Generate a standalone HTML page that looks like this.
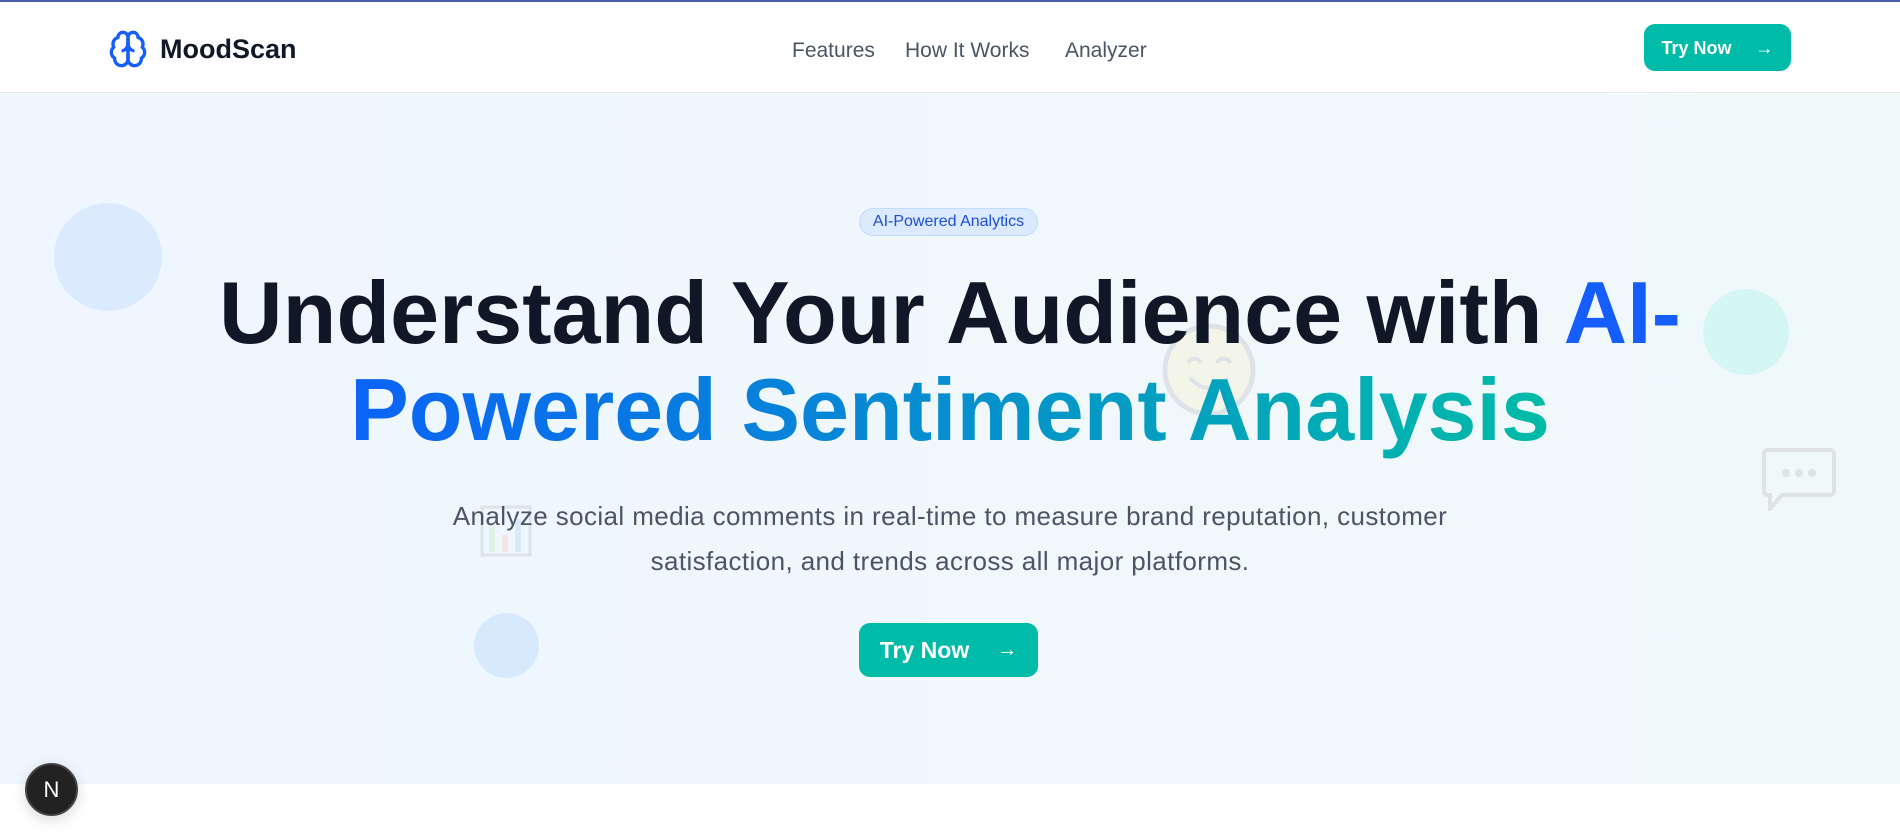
<!DOCTYPE html>
<html><head><meta charset="utf-8"><style>
*{margin:0;padding:0;box-sizing:border-box}
body{width:1900px;height:835px;overflow:hidden;background:#fff;font-family:"Liberation Sans",sans-serif;position:relative}
.top{position:absolute;left:0;top:0;width:1900px;height:2px;background:#4a5fa8}
nav{position:absolute;left:0;top:2px;width:1900px;height:91px;background:#fff;border-bottom:1px solid #e5e7eb}
.logo{position:absolute;left:108px;top:27px}
.brand{position:absolute;left:160px;top:32px;font-size:27px;font-weight:bold;color:#111827}
.links a{position:absolute;top:37px;font-size:21px;color:#4b5563;text-decoration:none}
.btn{position:absolute;background:#00bba7;color:#fff;font-weight:bold;border-radius:11px;display:flex;align-items:center;justify-content:center;line-height:1}
.hero{position:absolute;left:0;top:94px;width:1900px;height:690px;background:linear-gradient(90deg,#eff6ff,#f0f9fa)}
.c{position:absolute;border-radius:50%}
h1{position:absolute;left:0;width:1900px;top:264px;text-align:center;font-size:88px;line-height:97px;font-weight:bold;color:#101828}
.g{background:linear-gradient(90deg,#0b63f6,#00bba7);-webkit-background-clip:text;background-clip:text;color:transparent}
p{position:absolute;left:0;width:1900px;top:494px;text-align:center;font-size:26px;letter-spacing:0.4px;line-height:45px;color:#4a5565}
.badge{position:absolute;left:859px;top:208px;width:179px;height:28px;border-radius:14px;background:#dbeafe;border:1px solid #bfdbfe;color:#1d4ed8;font-size:16px;display:flex;align-items:center;justify-content:center}
</style></head><body>
<div class="top"></div>
<nav>
<svg class="logo" width="40" height="40" viewBox="0 0 24 24" fill="none" stroke="#155dfc" stroke-width="2" stroke-linecap="round" stroke-linejoin="round"><path d="M12 5a3 3 0 1 0-5.997.125 4 4 0 0 0-2.526 5.77 4 4 0 0 0 .556 6.588A4 4 0 1 0 12 18Z"/><path d="M12 5a3 3 0 1 1 5.997.125 4 4 0 0 1 2.526 5.77 4 4 0 0 1-.556 6.588A4 4 0 1 1 12 18Z"/><path d="M15 13a4.5 4.5 0 0 1-3-4 4.5 4.5 0 0 1-3 4"/><path d="M12 5v13"/></svg>
<div class="brand">MoodScan</div>
<div class="links"><a style="left:792px">Features</a><a style="left:905px">How It Works</a><a style="left:1065px">Analyzer</a></div>
<div class="btn" style="left:1644px;top:22px;width:147px;height:47px;font-size:18px">Try Now<span style="margin-left:24px;font-weight:normal">→</span></div>
</nav>
<div class="hero"></div>
<div class="c" style="left:54px;top:203px;width:108px;height:108px;background:#dbeafe"></div>
<div class="c" style="left:1703px;top:289px;width:86px;height:86px;background:#d5f7f2"></div>
<div class="c" style="left:474px;top:613px;width:65px;height:65px;background:#d6e9fd"></div>
<svg style="position:absolute;left:1162px;top:323px" width="94" height="94" viewBox="0 0 94 94"><circle cx="47" cy="47" r="44" fill="#f3f5e8" stroke="#dde3e6" stroke-width="5"/><path d="M26 40a7 7 0 0 1 13 0M55 40a7 7 0 0 1 13 0" fill="none" stroke="#dde3e6" stroke-width="4"/><path d="M28 55q19 20 38 0" fill="none" stroke="#dde3e6" stroke-width="4"/></svg>
<svg style="position:absolute;left:1762px;top:447px" width="74" height="64" viewBox="0 0 74 64"><path d="M6 3h62a4 4 0 0 1 4 4v37a4 4 0 0 1-4 4H20l-12 14V48H6a4 4 0 0 1-4-4V7a4 4 0 0 1 4-4z" fill="none" stroke="#dde3e6" stroke-width="4"/><circle cx="24" cy="26" r="4" fill="#dde3e6"/><circle cx="37" cy="26" r="4" fill="#dde3e6"/><circle cx="50" cy="26" r="4" fill="#dde3e6"/></svg>
<svg style="position:absolute;left:480px;top:505px" width="52" height="52" viewBox="0 0 52 52"><rect x="2" y="2" width="48" height="48" fill="none" stroke="#dde3e6" stroke-width="3"/><rect x="9" y="22" width="6" height="25" fill="#dcf2e4"/><rect x="22" y="30" width="6" height="17" fill="#f6e3e6"/><rect x="35" y="14" width="6" height="33" fill="#dbe8fb"/></svg>
<div class="badge">AI-Powered Analytics</div>
<h1>Understand Your Audience with <span style="color:#155dfc">AI-</span><br><span class="g">Powered Sentiment Analysis</span></h1>
<p>Analyze social media comments in real-time to measure brand reputation, customer<br>satisfaction, and trends across all major platforms.</p>
<div class="btn" style="left:859px;top:623px;width:179px;height:54px;font-size:23px">Try Now<span style="margin-left:28px;font-weight:normal;font-size:20px">→</span></div>
<div class="c" style="left:25px;top:763px;width:53px;height:53px;background:#222;border:2px solid #444;color:#fff;font-size:22px;display:flex;align-items:center;justify-content:center;box-shadow:0 4px 14px rgba(0,0,0,.15)">N</div>
</body></html>
